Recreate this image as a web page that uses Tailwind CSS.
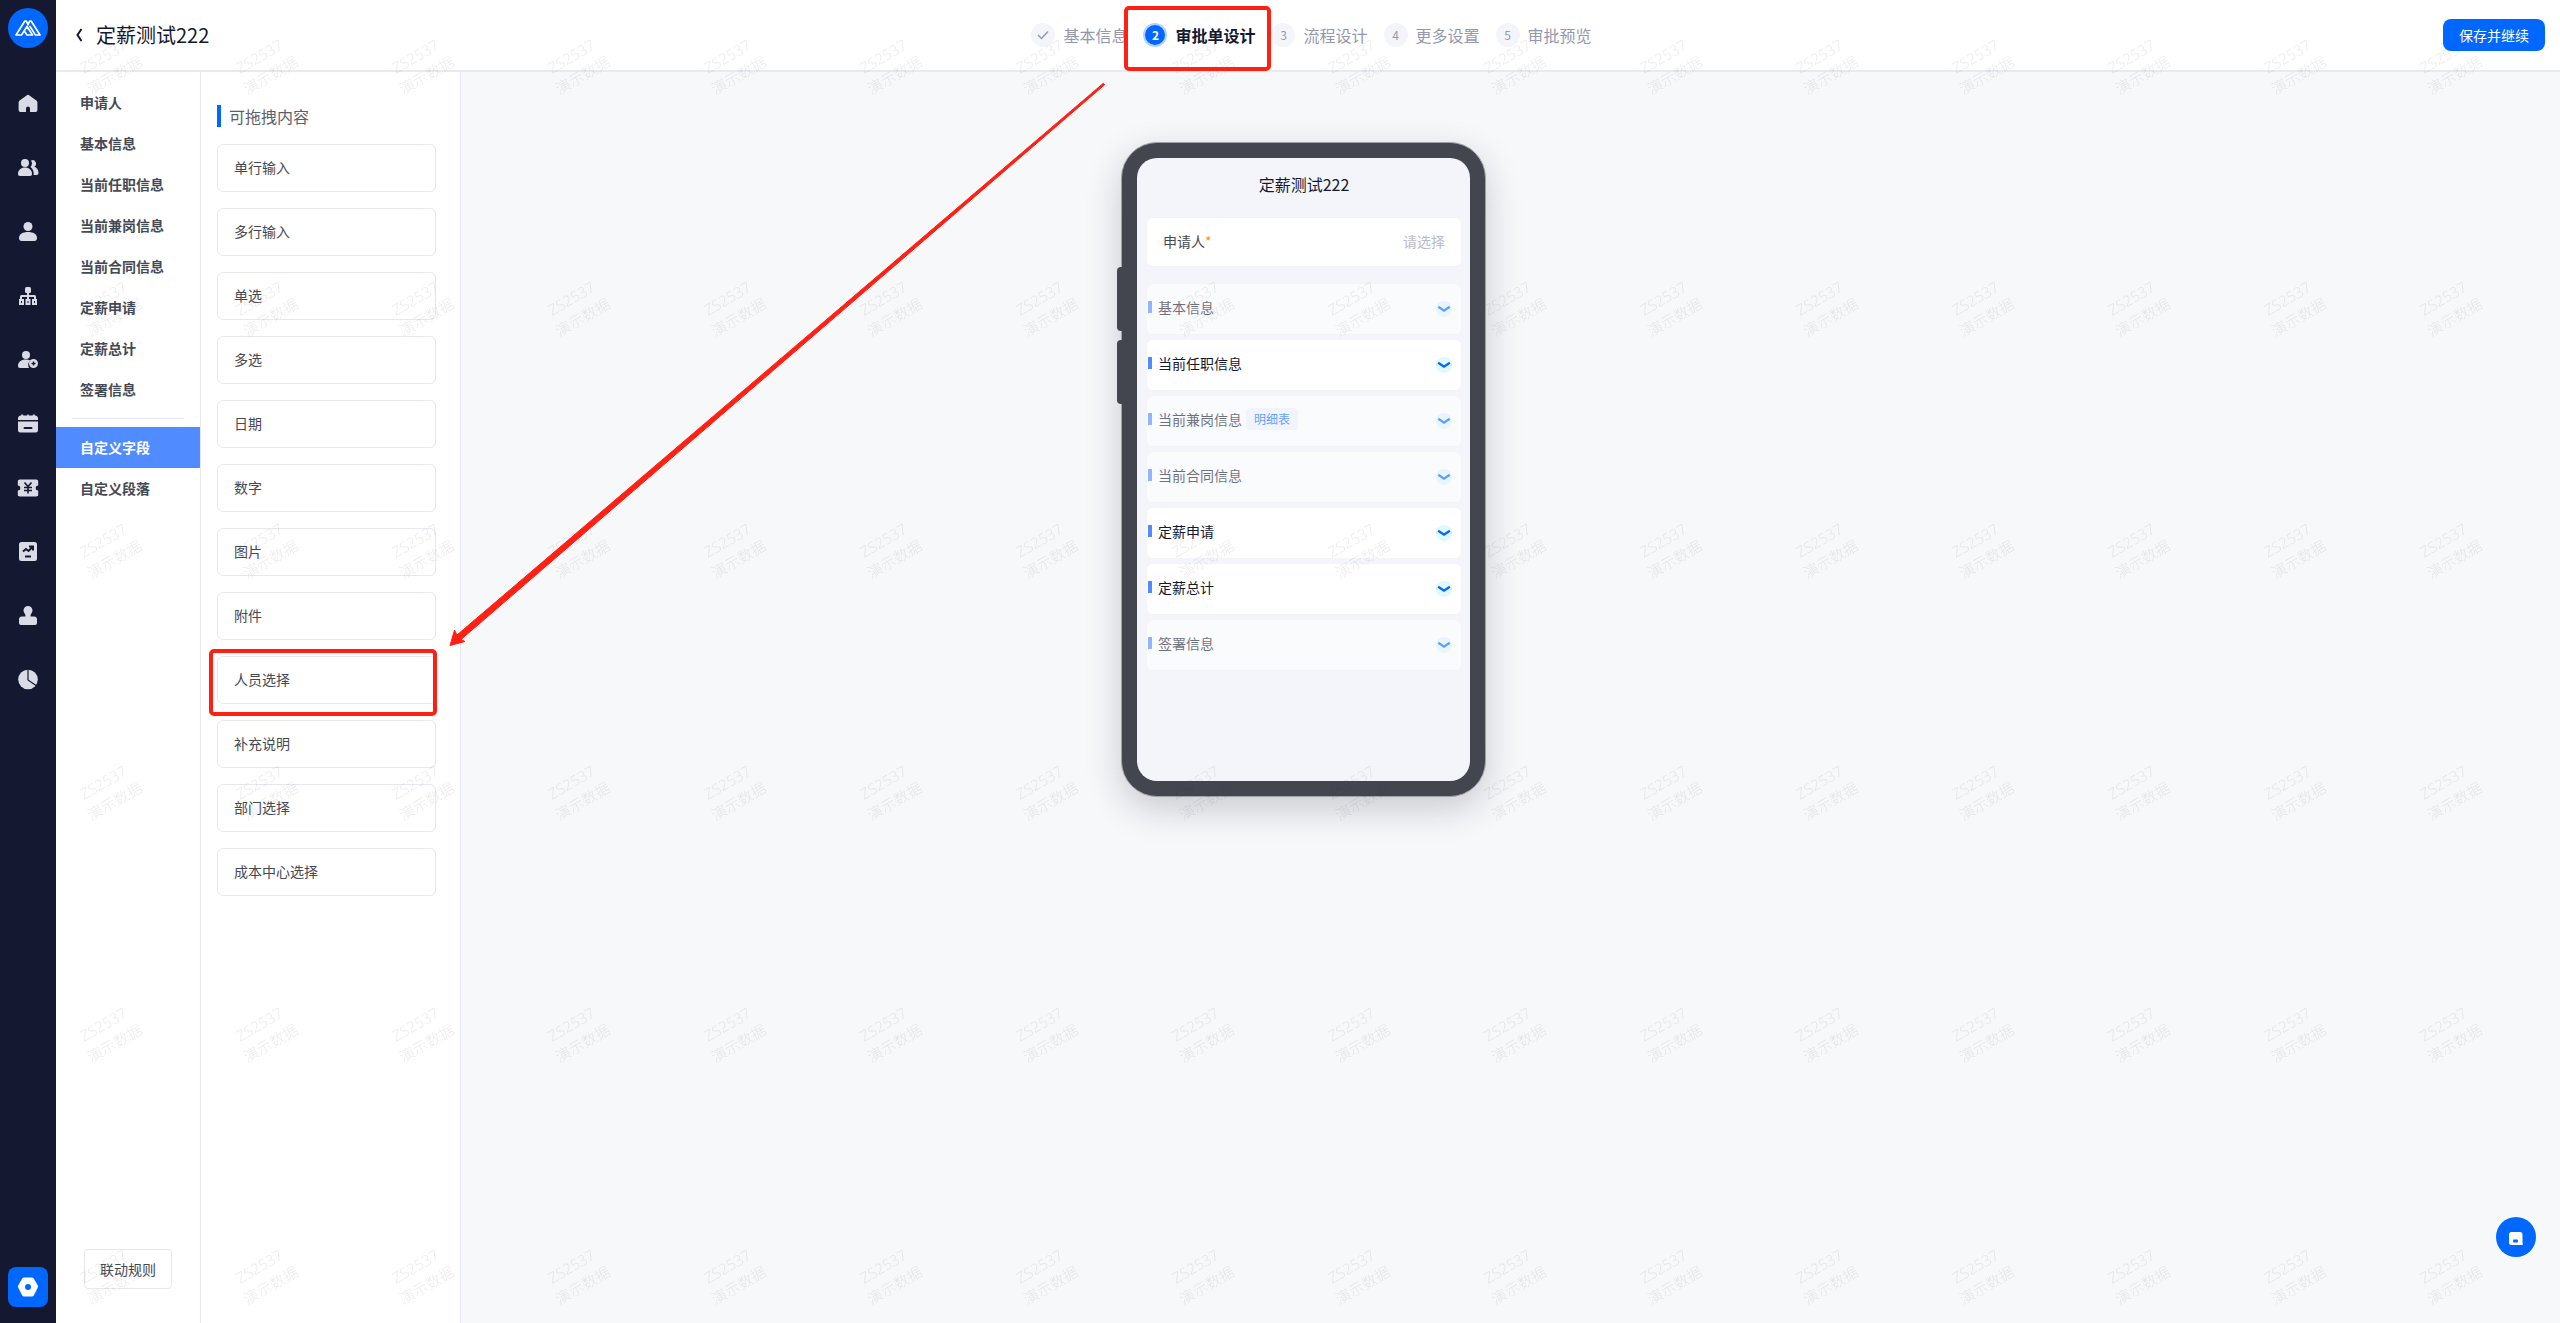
<!DOCTYPE html>
<html lang="zh-CN">
<head>
  <meta charset="UTF-8" />
  <meta name="viewport" content="width=device-width, initial-scale=1" />
  <title>定薪测试222 - 审批单设计</title>
  <script src="https://cdn.jsdelivr.net/npm/@tailwindcss/browser@4"></script>
  <style>
    body {
      font-family: 'Noto Sans CJK SC', sans-serif;
    }
  </style>
</head>
<body class="relative flex h-screen overflow-hidden bg-white text-[#454954]">

  <!-- Sidebar -->
  <aside class="flex w-14 shrink-0 flex-col items-center bg-[#141931] pt-2 pb-4 text-[#d9dbe5]">
    <a href="#" aria-label="首页" class="mb-10 flex size-10 items-center justify-center rounded-full bg-[#0068ff] text-white">
      <svg class="h-5 w-7" viewBox="0 0 28 20" fill="none" stroke="currentColor" stroke-width="1.700" stroke-linejoin="round" stroke-linecap="round">
        <path d="M14 6.500 12.300 3.200h-1.600L2 17h5.500L13 8.500 18.500 17H13l-2-3" />
        <path d="M14 6.500 15.700 3.200h1.600L26 17h-4.500L16 8.500" />
      </svg>
    </a>
    <nav class="flex flex-1 flex-col" aria-label="主菜单">
      <a href="#" aria-label="主页" class="flex h-16 w-14 justify-center pt-1">
        <svg class="size-6" viewBox="0 0 24 24" fill="currentColor"><path d="M10.600 3.400a2.200 2.200 0 0 1 2.800 0l7 5.200a2.600 2.600 0 0 1 1 2v7.400a2 2 0 0 1-2 2H14v-3.500a2 2 0 0 0-4 0V20H4.600a2 2 0 0 1-2-2v-7.400a2.600 2.600 0 0 1 1-2z" /></svg>
      </a>
      <a href="#" aria-label="员工" class="flex h-16 w-14 justify-center pt-1">
        <svg class="size-6" viewBox="0 0 24 24" fill="currentColor"><circle cx="9" cy="7" r="4" /><path d="M2 18c0-4 3-6.500 7-6.500s7 2.500 7 6.500c0 1.200-.8 2-2 2H4c-1.200 0-2-.8-2-2z" /><path d="M14.500 11a5.500 5.500 0 0 0 .5-6.500 3.300 3.300 0 0 1 3.200 6c2.600.9 4.300 3.300 4.300 6.500 0 1.300-.7 2-1.800 2h-3c.3-3.400-.8-6-3.200-8z" /></svg>
      </a>
      <a href="#" aria-label="个人" class="flex h-16 w-14 justify-center pt-1">
        <svg class="size-6" viewBox="0 0 24 24" fill="currentColor"><circle cx="12" cy="6.500" r="4.500" /><path d="M3 18c0-4 4-6 9-6s9 2 9 6c0 2-1 3-2.500 3h-13C4 21 3 20 3 18z" /></svg>
      </a>
      <a href="#" aria-label="组织" class="flex h-16 w-14 justify-center pt-1">
        <svg class="size-6" viewBox="0 0 24 24" fill="currentColor"><rect x="9" y="3" width="6" height="6" rx="1.500" /><path d="M11 8h2v3h5.500a1.500 1.500 0 0 1 1.500 1.500V15h-2v-2h-5v2h-2v-2H6v2H4v-2.500A1.500 1.500 0 0 1 5.500 11H11z" /><path fill="none" stroke="currentColor" stroke-width="2" d="M4 16h3v4H4zM10.500 16h3v4h-3zM17 16h3v4h-3z" /></svg>
      </a>
      <a href="#" aria-label="入职" class="flex h-16 w-14 justify-center pt-1">
        <svg class="size-6" viewBox="0 0 24 24" fill="currentColor"><circle cx="10" cy="7" r="4" /><path d="M2 18c0-4 3-6.500 8-6.500 1.700 0 3.200.4 4.400 1.100A6 6 0 0 0 13 20H4c-1.200 0-2-.8-2-2z" /><path fill-rule="evenodd" d="M17.500 11a4.500 4.500 0 1 1 0 9 4.500 4.500 0 0 1 0-9zm-.7 2.500v1.300h-1.300v1.400h1.300v1.300h1.400v-1.300h1.300v-1.400h-1.300v-1.300z" /></svg>
      </a>
      <a href="#" aria-label="考勤" class="flex h-16 w-14 justify-center pt-1">
        <svg class="size-6" viewBox="0 0 24 24" fill="currentColor"><path d="M5 3.500 6 2l1.500 1.500H11L12 2l1 1.500h3.500L18 2l1 1.500c2 .2 3 1.200 3 3V8H2V6.500c0-1.800 1-2.800 3-3z" /><path fill-rule="evenodd" d="M2 9.500h20V18a2.500 2.500 0 0 1-2.500 2.500h-15A2.500 2.500 0 0 1 2 18zm6.500 5.500a1 1 0 0 0 0 2h7a1 1 0 0 0 0-2z" /></svg>
      </a>
      <a href="#" aria-label="薪酬" class="flex h-16 w-14 justify-center pt-1">
        <svg class="size-6" viewBox="0 0 24 24" fill="currentColor"><path d="M4 3.500h16A2.200 2.200 0 0 1 22.200 6v3.500a2.500 2.500 0 0 0 0 5V18a2.200 2.200 0 0 1-2.200 2.500H4A2.200 2.200 0 0 1 1.800 18v-3.500a2.500 2.500 0 0 0 0-5V6A2.200 2.200 0 0 1 4 3.500z" /><path fill="none" stroke="#141931" stroke-width="1.600" d="m8.500 6.500 3.500 4 3.500-4M12 10.500v7M8 11.500h8M8 14.500h8" /></svg>
      </a>
      <a href="#" aria-label="绩效" class="flex h-16 w-14 justify-center pt-1">
        <svg class="size-6" viewBox="0 0 24 24" fill="currentColor"><rect x="3" y="2" width="18" height="19" rx="2.500" /><path fill="none" stroke="#141931" stroke-width="2" d="m7 11.500 3-2.500 2.500 2 4-4M13 6.500h4v4M9 16.500h6" /></svg>
      </a>
      <a href="#" aria-label="审批" class="flex h-16 w-14 justify-center pt-1">
        <svg class="size-6" viewBox="0 0 24 24" fill="currentColor"><path d="M12 2a4.500 4.500 0 0 1 4.500 4.500c0 2.500-2 3-2 5.500v.5H18a3 3 0 0 1 3 3V19a2 2 0 0 1-2 2H5a2 2 0 0 1-2-2v-3.500a3 3 0 0 1 3-3h3.500V12c0-2.500-2-3-2-5.500A4.500 4.500 0 0 1 12 2z" /></svg>
      </a>
      <a href="#" aria-label="报表" class="flex h-16 w-14 justify-center pt-1">
        <svg class="size-6" viewBox="0 0 24 24" fill="currentColor"><circle cx="12" cy="11.500" r="9.800" /><path fill="none" stroke="#141931" stroke-width="1.200" d="M12 1.500V12l8 5.500" /></svg>
      </a>
    </nav>
    <a href="#" aria-label="设置" class="flex size-10 items-center justify-center rounded-lg bg-[#0068ff] text-white">
      <svg class="size-6" viewBox="0 0 24 24" fill="currentColor"><path fill-rule="evenodd" d="M8.300 2.500h7.400a2.500 2.500 0 0 1 2.200 1.200l3.800 6.500a2.500 2.500 0 0 1 0 2.600l-3.800 7.500a2.500 2.500 0 0 1-2.200 1.200H8.300a2.500 2.500 0 0 1-2.200-1.200l-3.800-7.500a2.500 2.500 0 0 1 0-2.600l3.800-6.500a2.500 2.500 0 0 1 2.200-1.200zM12 9a3 3 0 1 0 0 6 3 3 0 0 0 0-6z" /></svg>
    </a>
  </aside>

  <div class="flex min-w-0 flex-1 flex-col">
    <!-- Header -->
    <header class="grid h-18 shrink-0 grid-cols-[1fr_auto_1fr] items-center border-b-2 border-[#e8e9f3] pr-[15px] pl-4">
      <div class="flex items-center gap-2">
        <button type="button" aria-label="返回" class="size-4">
          <svg class="size-4" viewBox="0 0 16 16" fill="none" stroke="#141931" stroke-width="2"><path d="m9.500 2-4 6 4 6" /></svg>
        </button>
        <h1 class="text-xl text-[#141931]">定薪测试222</h1>
      </div>
      <ol class="flex items-center gap-4 pl-1.5 text-base text-[#9498ae]">
        <li class="flex items-center gap-2">
          <span class="flex size-6 items-center justify-center rounded-full bg-[#f4f5fb]">
            <svg class="size-3" viewBox="0 0 12 12" fill="none" stroke="currentColor" stroke-width="1.500"><path d="m1 6 3.500 3.500L11 2.500" /></svg>
          </span>
          基本信息
        </li>
        <li class="flex items-center gap-2 font-bold text-[#141931]">
          <span class="flex size-6 items-center justify-center rounded-full border-2 border-[#b3d1ff] bg-[#0068ff] text-xs text-white">2</span>
          审批单设计
        </li>
        <li class="flex items-center gap-2">
          <span class="flex size-6 items-center justify-center rounded-full bg-[#f4f5fb] text-xs">3</span>
          流程设计
        </li>
        <li class="flex items-center gap-2">
          <span class="flex size-6 items-center justify-center rounded-full bg-[#f4f5fb] text-xs">4</span>
          更多设置
        </li>
        <li class="flex items-center gap-2">
          <span class="flex size-6 items-center justify-center rounded-full bg-[#f4f5fb] text-xs">5</span>
          审批预览
        </li>
      </ol>
      <button type="button" class="h-8 justify-self-end rounded-lg bg-[#0068ff] px-4 text-sm text-white">保存并继续</button>
    </header>

    <div class="flex min-h-0 flex-1">
      <!-- Field groups -->
      <div class="flex w-36 shrink-0 flex-col pt-2.5 pb-[34px]">
        <nav class="flex flex-col text-sm leading-[41px] font-bold" aria-label="字段分组">
          <a href="#" class="pl-6">申请人</a>
          <a href="#" class="pl-6">基本信息</a>
          <a href="#" class="pl-6">当前任职信息</a>
          <a href="#" class="pl-6">当前兼岗信息</a>
          <a href="#" class="pl-6">当前合同信息</a>
          <a href="#" class="pl-6">定薪申请</a>
          <a href="#" class="pl-6">定薪总计</a>
          <a href="#" class="pl-6">签署信息</a>
          <hr class="mx-4 my-2 border-[#e6e7f2]" />
          <a href="#" class="bg-[#508cff] pl-6 text-white">自定义字段</a>
          <a href="#" class="pl-6">自定义段落</a>
        </nav>
        <button type="button" class="mt-auto h-10 self-center rounded-sm border border-[#e6e7f2] px-[15px] text-sm">联动规则</button>
      </div>

      <!-- Draggable fields -->
      <section class="w-[261px] shrink-0 border-x border-[#e6e7f2] pt-[33px] pr-6 pl-4">
        <h2 class="mb-[17px] border-l-4 border-[#0068ff] pl-2 text-base leading-[22px] text-[#5c606c]">可拖拽内容</h2>
        <ul class="flex flex-col gap-4 text-sm leading-[44px]">
          <li class="rounded-md border border-[#e6e7f2] pb-0.5 pl-4">单行输入</li>
          <li class="rounded-md border border-[#e6e7f2] pb-0.5 pl-4">多行输入</li>
          <li class="rounded-md border border-[#e6e7f2] pb-0.5 pl-4">单选</li>
          <li class="rounded-md border border-[#e6e7f2] pb-0.5 pl-4">多选</li>
          <li class="rounded-md border border-[#e6e7f2] pb-0.5 pl-4">日期</li>
          <li class="rounded-md border border-[#e6e7f2] pb-0.5 pl-4">数字</li>
          <li class="rounded-md border border-[#e6e7f2] pb-0.5 pl-4">图片</li>
          <li class="rounded-md border border-[#e6e7f2] pb-0.5 pl-4">附件</li>
          <li class="rounded-md border border-[#e6e7f2] pb-0.5 pl-4">人员选择</li>
          <li class="rounded-md border border-[#e6e7f2] pb-0.5 pl-4">补充说明</li>
          <li class="rounded-md border border-[#e6e7f2] pb-0.5 pl-4">部门选择</li>
          <li class="rounded-md border border-[#e6e7f2] pb-0.5 pl-4">成本中心选择</li>
        </ul>
      </section>

      <!-- Phone preview -->
      <main class="flex flex-1 items-start justify-center bg-[#f7f8fa] pt-[70px] pr-[414px]">
        <div class="relative w-[365px] rounded-[36px] border border-[#a0a2ab] bg-[#43464f] p-[15px] shadow-[0_12px_36px_rgba(20,20,40,0.2)]">
          <span class="absolute top-[124px] -left-[5px] h-16 w-[5px] rounded-l-sm bg-[#43464f]"></span>
          <span class="absolute top-[197px] -left-[5px] h-16 w-[5px] rounded-l-sm bg-[#43464f]"></span>
          <div class="min-h-[623px] rounded-[20px] bg-[#f4f5fb] pt-3.5 pr-[9px] pl-2.5 text-sm">
            <h2 class="mb-[22px] text-center text-base text-[#141931]">定薪测试222</h2>
            <div class="mb-[18px] flex h-12 items-center justify-between rounded-md bg-white px-4 pb-0.5">
              <span>申请人<span class="text-[#ff9500]">*</span></span>
              <button type="button" class="text-[#b8bbcc]">请选择</button>
            </div>
            <ul class="flex flex-col gap-1.5 text-[#141931]">
              <li class="flex h-[50px] items-center rounded-md bg-white pr-[9px] pb-1 pl-px opacity-60">
                <span class="mr-1.5 h-3 w-1 bg-[#508cff]"></span>基本信息
                <svg class="mt-1 ml-auto size-4" viewBox="0 0 16 16" fill="none"><circle cx="8" cy="8" r="8" fill="#e0f8ff" /><path d="M2.200 5.700 8 9.700l5.800-4" stroke="#0068ff" stroke-width="2.300" /></svg>
              </li>
              <li class="flex h-[50px] items-center rounded-md bg-white pr-[9px] pb-1 pl-px">
                <span class="mr-1.5 h-3 w-1 bg-[#508cff]"></span>当前任职信息
                <svg class="mt-1 ml-auto size-4" viewBox="0 0 16 16" fill="none"><circle cx="8" cy="8" r="8" fill="#e0f8ff" /><path d="M2.200 5.700 8 9.700l5.800-4" stroke="#0068ff" stroke-width="2.300" /></svg>
              </li>
              <li class="flex h-[50px] items-center rounded-md bg-white pr-[9px] pb-1 pl-px opacity-60">
                <span class="mr-1.5 h-3 w-1 bg-[#508cff]"></span>当前兼岗信息
                <span class="ml-1 rounded-sm bg-[#f0f4ff] px-2 text-xs leading-[22px] text-[#0068ff]">明细表</span>
                <svg class="mt-1 ml-auto size-4" viewBox="0 0 16 16" fill="none"><circle cx="8" cy="8" r="8" fill="#e0f8ff" /><path d="M2.200 5.700 8 9.700l5.800-4" stroke="#0068ff" stroke-width="2.300" /></svg>
              </li>
              <li class="flex h-[50px] items-center rounded-md bg-white pr-[9px] pb-1 pl-px opacity-60">
                <span class="mr-1.5 h-3 w-1 bg-[#508cff]"></span>当前合同信息
                <svg class="mt-1 ml-auto size-4" viewBox="0 0 16 16" fill="none"><circle cx="8" cy="8" r="8" fill="#e0f8ff" /><path d="M2.200 5.700 8 9.700l5.800-4" stroke="#0068ff" stroke-width="2.300" /></svg>
              </li>
              <li class="flex h-[50px] items-center rounded-md bg-white pr-[9px] pb-1 pl-px">
                <span class="mr-1.5 h-3 w-1 bg-[#508cff]"></span>定薪申请
                <svg class="mt-1 ml-auto size-4" viewBox="0 0 16 16" fill="none"><circle cx="8" cy="8" r="8" fill="#e0f8ff" /><path d="M2.200 5.700 8 9.700l5.800-4" stroke="#0068ff" stroke-width="2.300" /></svg>
              </li>
              <li class="flex h-[50px] items-center rounded-md bg-white pr-[9px] pb-1 pl-px">
                <span class="mr-1.5 h-3 w-1 bg-[#508cff]"></span>定薪总计
                <svg class="mt-1 ml-auto size-4" viewBox="0 0 16 16" fill="none"><circle cx="8" cy="8" r="8" fill="#e0f8ff" /><path d="M2.200 5.700 8 9.700l5.800-4" stroke="#0068ff" stroke-width="2.300" /></svg>
              </li>
              <li class="flex h-[50px] items-center rounded-md bg-white pr-[9px] pb-1 pl-px opacity-60">
                <span class="mr-1.5 h-3 w-1 bg-[#508cff]"></span>签署信息
                <svg class="mt-1 ml-auto size-4" viewBox="0 0 16 16" fill="none"><circle cx="8" cy="8" r="8" fill="#e0f8ff" /><path d="M2.200 5.700 8 9.700l5.800-4" stroke="#0068ff" stroke-width="2.300" /></svg>
              </li>
            </ul>
          </div>
        </div>
      </main>
    </div>
  </div>

  <!-- Help button -->
  <button type="button" aria-label="帮助" class="absolute right-6 bottom-[66px] flex size-10 items-center justify-center rounded-full bg-[#0068ff]">
    <svg class="size-4" viewBox="0 0 16 16"><path fill="#fff" d="M3.500 3h8.500A2.500 2.500 0 0 1 14.500 5.500v8l.5 3L3.500 16A2.500 2.500 0 0 1 1 13.500v-8A2.500 2.500 0 0 1 3.500 3z" /><rect x="5" y="10.500" width="5" height="3" rx="1" fill="#0068ff" /></svg>
  </button>

  <!-- Watermark -->
  <svg class="pointer-events-none absolute inset-0 h-full w-full" aria-hidden="true">
    <defs>
      <pattern id="watermark" width="156" height="242" patternUnits="userSpaceOnUse" x="60" y="20">
        <g transform="translate(24 54) rotate(-30)" fill="#141931" fill-opacity="0.09" font-size="15" font-weight="300">
          <text x="0" y="0" font-family="Noto Sans">ZS2537</text>
          <text x="-4" y="22">演示数据</text>
        </g>
      </pattern>
    </defs>
    <rect x="60" width="100%" height="100%" fill="url(#watermark)" />
  </svg>

  <!-- Callouts -->
  <svg class="pointer-events-none absolute inset-0 h-full w-full" fill="none" stroke="#ff2014" stroke-width="4" aria-hidden="true">
    <rect x="1126" y="8" width="143" height="61" rx="3" />
    <rect x="211" y="651" width="224" height="63" rx="3" />
    <path d="M1103.400 83.200 457 635 454.500 630 450 645.500 465 641.500 461 639.500 1104.600 84.800z" fill="#ff2014" stroke="#ff2014" stroke-width="1" />
  </svg>
</body>
</html>
